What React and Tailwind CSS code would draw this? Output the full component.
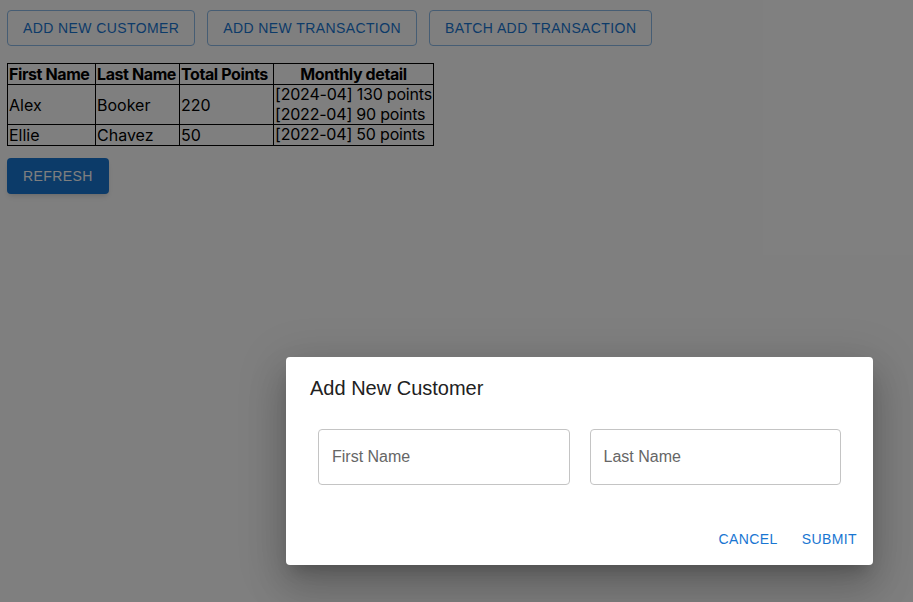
const customers = [
  { first: "Alex", last: "Booker", total: 220, months: ["[2024-04] 130 points", "[2022-04] 90 points"] },
  { first: "Ellie", last: "Chavez", total: 50, months: ["[2022-04] 50 points"] },
];

function OutlinedButton({ children }) {
  return (
    <button className="h-[36px] px-[15px] rounded-[4px] border border-[#8cbae8] text-[#1976d2] text-[14px] tracking-[0.4px] font-medium uppercase font-['Liberation_Sans',Arial,sans-serif]">
      {children}
    </button>
  );
}

function TextField({ label }) {
  return (
    <div className="m-2 flex-1 h-[56px] rounded-[4px] border border-[#c4c4c4] flex items-center px-[13px]">
      <span className="text-[16px] text-[#666] font-['Liberation_Sans',Arial,sans-serif]">{label}</span>
    </div>
  );
}

export default function App() {
  return (
    <div className="relative w-[913px] h-[602px] bg-white overflow-hidden">
      <div className="p-[7px] pt-[10px]">
        <div className="flex gap-3">
          <OutlinedButton>Add New Customer</OutlinedButton>
          <OutlinedButton>Add New Transaction</OutlinedButton>
          <OutlinedButton>Batch Add Transaction</OutlinedButton>
        </div>

        <table className="mt-[17px] border-collapse table-fixed w-[426px] text-[16px] leading-[18px] text-black font-['Inter',sans-serif]">
          <colgroup>
            <col className="w-[88px]" />
            <col className="w-[84px]" />
            <col className="w-[94px]" />
            <col className="w-[160px]" />
          </colgroup>
          <thead>
            <tr>
              <th className="border border-black p-px text-left font-bold whitespace-nowrap tracking-[-0.4px]">First Name</th>
              <th className="border border-black p-px text-left font-bold whitespace-nowrap tracking-[-0.4px]">Last Name</th>
              <th className="border border-black p-px text-left font-bold whitespace-nowrap tracking-[-0.4px]">Total Points</th>
              <th className="border border-black p-px text-center font-bold whitespace-nowrap tracking-[-0.4px]">Monthly detail</th>
            </tr>
          </thead>
          <tbody>
            {customers.map((c) => (
              <tr key={c.first}>
                <td className="border border-black p-px">{c.first}</td>
                <td className="border border-black p-px">{c.last}</td>
                <td className="border border-black p-px">{c.total}</td>
                <td className="border border-black px-px py-0 whitespace-nowrap tracking-[-0.2px]">
                  {c.months.map((m) => (
                    <div key={m} className="leading-[19.5px]">{m}</div>
                  ))}
                </td>
              </tr>
            ))}
          </tbody>
        </table>

        <button className="mt-3 h-[36px] px-4 rounded-[4px] bg-[#1976d2] text-white text-[14px] tracking-[0.4px] font-medium uppercase shadow-md font-['Liberation_Sans',Arial,sans-serif]">
          Refresh
        </button>
      </div>

      <div className="absolute inset-0 bg-black/50">
        <div className="absolute left-[286px] top-[357px] w-[587px] bg-white rounded-[4px] shadow-[0_11px_15px_-7px_rgba(0,0,0,0.2),0_24px_38px_3px_rgba(0,0,0,0.14),0_9px_46px_8px_rgba(0,0,0,0.12)] font-['Liberation_Sans',Arial,sans-serif]">
          <h2 className="px-6 pt-[15px] pb-px text-[20px] leading-[32px] text-[#212121]">Add New Customer</h2>
          <div className="px-6 pt-4 pb-5">
            <div className="flex gap-1">
              <TextField label="First Name" />
              <TextField label="Last Name" />
            </div>
          </div>
          <div className="flex justify-end gap-2 p-2">
            <button className="h-[36px] px-2 text-[14px] tracking-[0.4px] font-medium uppercase text-[#1976d2]">Cancel</button>
            <button className="h-[36px] px-2 text-[14px] tracking-[0.4px] font-medium uppercase text-[#1976d2]">Submit</button>
          </div>
        </div>
      </div>
    </div>
  );
}
